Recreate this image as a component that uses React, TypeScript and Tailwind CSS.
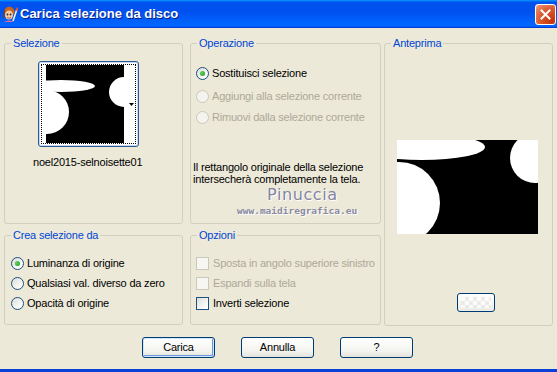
import React from 'react';

type Opt = { checked?: boolean; disabled?: boolean };

function Radio({ checked = false, disabled = false }: Opt) {
  return (
    <span
      className={
        disabled
          ? 'flex h-[13px] w-[13px] shrink-0 items-center justify-center rounded-full border border-[#CAC8BB] bg-[#F4F3EE]'
          : 'flex h-[13px] w-[13px] shrink-0 items-center justify-center rounded-full border border-[#1C5180] bg-[linear-gradient(135deg,#DCDCD7_0%,#FFFFFF_85%)]'
      }
    >
      {checked && <span className="h-[5px] w-[5px] rounded-full bg-[radial-gradient(circle_at_35%_35%,#5CD45C,#1E9A1E)]" />}
    </span>
  );
}

function Check({ disabled = false }: Opt) {
  return (
    <span
      className={
        disabled
          ? 'block h-[13px] w-[13px] shrink-0 border border-[#CAC8BB] bg-[#F7F6F2]'
          : 'block h-[13px] w-[13px] shrink-0 border border-[#1C5180] bg-[linear-gradient(135deg,#DCDCD7_0%,#FFFFFF_85%)]'
      }
    />
  );
}

function Group({ title, className, children }: { title: string; className: string; children?: React.ReactNode }) {
  return (
    <fieldset className={`rounded-[3px] border border-[#D0D0BF] ${className}`}>
      <legend className="ml-[6px] px-[2px] text-[11px] leading-[13px] text-[#0046D5]">{title}</legend>
      {children}
    </fieldset>
  );
}

function Btn({ label, def = false }: { label: string; def?: boolean }) {
  return (
    <div
      className={
        def
          ? 'flex h-[21px] w-[73px] items-center justify-center rounded-[3px] border border-[#003C74] bg-[linear-gradient(180deg,#FFFFFF_0%,#F3F3EF_70%,#E3E2DA_100%)] shadow-[inset_0_0_0_1px_#CEE7FF,inset_-1px_-1px_0_1px_#6D97E0]'
          : 'flex h-[21px] w-[73px] items-center justify-center rounded-[3px] border border-[#003C74] bg-[linear-gradient(180deg,#FFFFFF_0%,#F3F3EF_70%,#E3E2DA_100%)]'
      }
    >
      {label}
    </div>
  );
}

function Thumb() {
  return (
    <svg width="78" height="78" viewBox="0 0 78 78">
      <rect width="78" height="78" fill="#000" />
      <ellipse cx="15" cy="21" rx="34" ry="6" fill="#fff" />
      <circle cx="78" cy="27" r="15" fill="#fff" />
      <circle cx="1" cy="47" r="22" fill="#fff" />
    </svg>
  );
}

function Preview() {
  return (
    <svg width="141" height="94" viewBox="0 0 141 94">
      <rect width="141" height="94" fill="#000" />
      <ellipse cx="25" cy="7" rx="63" ry="13" fill="#fff" />
      <circle cx="2" cy="63" r="41" fill="#fff" />
      <circle cx="138" cy="18" r="25" fill="#fff" />
    </svg>
  );
}

export default function App() {
  return (
    <div className="flex h-[372px] w-[557px] flex-col overflow-hidden bg-[#ECE9D8] font-['Liberation_Sans',Arial,sans-serif] text-[11px] tracking-[-0.2px] text-black">
      {/* title bar */}
      <div className="flex h-[28px] shrink-0 items-center bg-[linear-gradient(180deg,#0997FF_0%,#0053EE_8%,#0050EE_40%,#0066FF_88%,#0066FF_93%,#005BFF_95%,#003DD7_96%,#003DD7_100%)] pl-[2px] pr-[1px]">
        <svg width="16" height="17" viewBox="0 0 16 17" className="shrink-0">
          <path d="M2 6 C2 2 6 0 9 1 C12 2 13 5 12 8 L9 9 L4 9 Z" fill="#C8651E" />
          <ellipse cx="7" cy="9" rx="4" ry="4.5" fill="#F4CDA4" />
          <circle cx="5.5" cy="8.5" r="0.9" fill="#3A2410" />
          <circle cx="8.5" cy="8.5" r="0.9" fill="#3A2410" />
          <path d="M5 11.5 Q7 13 9 11.5" stroke="#B04030" strokeWidth="0.8" fill="none" />
          <path d="M3 4 C2 7 1 9 2 12" stroke="#8A3E10" strokeWidth="1.2" fill="none" />
          <path d="M11 15 L15 3" stroke="#F5F0E0" strokeWidth="1.6" />
          <path d="M14.4 4.6 L15.4 1.6" stroke="#E84A2A" strokeWidth="1.8" />
          <path d="M2 16 Q7 13 12 16" fill="#E86AA0" />
        </svg>
        <span className="ml-[2px] text-[13px] font-bold tracking-normal text-white [text-shadow:1px_1px_0_#0A1E8A]">
          Carica selezione da disco
        </span>
        <div className="ml-auto flex h-[21px] w-[21px] items-center justify-center rounded-[3px] border border-white bg-[radial-gradient(circle_at_85%_85%,#C2360C_0%,#DC5A2E_55%,#E98462_85%,#F5B79E_100%)]">
          <svg width="11" height="11" viewBox="0 0 11 11">
            <path d="M1.5 1.5 L9.5 9.5 M9.5 1.5 L1.5 9.5" stroke="#fff" strokeWidth="2" strokeLinecap="square" />
          </svg>
        </div>
      </div>

      {/* groups */}
      <div className="flex pl-[4px] pt-[9px]">
        <div className="flex flex-col gap-[5px]">
          <div className="flex gap-[7px]">
            <Group title="Selezione" className="h-[187px] w-[179px]">
              <div className="ml-[33px] mt-[11px] h-[86px] w-[101px] rounded-[3px] border border-[#2C5A96] bg-white p-[2px] shadow-[inset_0_0_0_1px_#C9D8EE]">
                <div className="flex h-full w-full border border-dotted border-black">
                  <div className="pl-[4px]">
                    <Thumb />
                  </div>
                  <div className="flex flex-1 items-center justify-end pr-[1px]">
                    <svg width="5" height="3" viewBox="0 0 5 3">
                      <path d="M0 0 H5 L2.5 3 Z" fill="#000" />
                    </svg>
                  </div>
                </div>
              </div>
              <div className="ml-[28px] mt-[9px] leading-[13px]">noel2015-selnoisette01</div>
            </Group>
            <Group title="Operazione" className="h-[187px] w-[191px]">
              <div className="ml-[5px] mt-[17px] flex h-[13px] items-center gap-[3px]">
                <Radio checked />
                <span>Sostituisci selezione</span>
              </div>
              <div className="ml-[5px] mt-[10px] flex h-[13px] items-center gap-[3px] text-[#ACA899]">
                <Radio disabled />
                <span>Aggiungi alla selezione corrente</span>
              </div>
              <div className="ml-[5px] mt-[8px] flex h-[13px] items-center gap-[3px] text-[#ACA899]">
                <Radio disabled />
                <span>Rimuovi dalla selezione corrente</span>
              </div>
              <div className="ml-[2px] mt-[37px] leading-[12px]">
                Il rettangolo originale della selezione
                <br />
                intersecherà completamente la tela.
              </div>
              <div className="pl-[76px] font-['DejaVu_Sans',sans-serif] text-[16px] leading-[20px] tracking-[0.6px] text-[#8484A0] [text-shadow:1px_1px_0_#FFFFFF,-1px_0_0_#F4F2EA]">
                Pinuccia
              </div>
              <div className="pl-[46px] font-['DejaVu_Sans_Mono',monospace] text-[9.5px] font-bold leading-[12px] tracking-normal text-[#8A8AA2] [text-shadow:1px_1px_0_#FFFFFF]">
                www.maidiregrafica.eu
              </div>
            </Group>
          </div>
          <div className="flex gap-[7px]">
            <Group title="Crea selezione da" className="h-[96px] w-[179px]">
              <div className="ml-[6px] mt-[15px] flex flex-col gap-[7px]">
                <div className="flex h-[13px] items-center gap-[3px]">
                  <Radio checked />
                  <span>Luminanza di origine</span>
                </div>
                <div className="flex h-[13px] items-center gap-[3px]">
                  <Radio />
                  <span>Qualsiasi val. diverso da zero</span>
                </div>
                <div className="flex h-[13px] items-center gap-[3px]">
                  <Radio />
                  <span>Opacità di origine</span>
                </div>
              </div>
            </Group>
            <Group title="Opzioni" className="h-[96px] w-[191px]">
              <div className="ml-[5px] mt-[15px] flex flex-col gap-[7px]">
                <div className="flex h-[13px] items-center gap-[4px] text-[#ACA899]">
                  <Check disabled />
                  <span>Sposta in angolo superiore sinistro</span>
                </div>
                <div className="flex h-[13px] items-center gap-[4px] text-[#ACA899]">
                  <Check disabled />
                  <span>Espandi sulla tela</span>
                </div>
                <div className="flex h-[13px] items-center gap-[4px]">
                  <Check />
                  <span>Inverti selezione</span>
                </div>
              </div>
            </Group>
          </div>
        </div>
        <Group title="Anteprima" className="ml-[3px] h-[289px] w-[169px]">
          <div className="ml-[12px] mt-[90px]">
            <Preview />
          </div>
          <div className="ml-[72px] mt-[59px] h-[19px] w-[38px] rounded-[3px] border border-[#003C74] bg-[linear-gradient(180deg,#FFFFFF,#ECEBE6)] p-[3px]">
            <div className="h-full w-full bg-[repeating-conic-gradient(#E6E6E6_0%_25%,#FFFFFF_0%_50%)] bg-[length:8px_8px] opacity-70" />
          </div>
        </Group>
      </div>

      {/* buttons */}
      <div className="mt-[11px] flex justify-center gap-[26px] pr-[2px]">
        <Btn label="Carica" def />
        <Btn label="Annulla" />
        <Btn label="?" />
      </div>

      <div className="flex-1" />
      <div className="h-[3px] shrink-0 bg-[#0840D8]" />
    </div>
  );
}
